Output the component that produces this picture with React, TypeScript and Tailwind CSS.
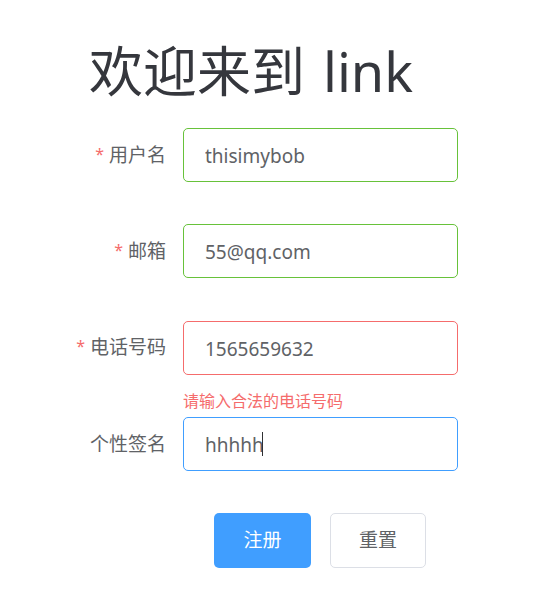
import React from 'react';

const FONT = '[font-family:"Noto_Sans","Noto_Sans_CJK_SC",sans-serif]';

type Field = {
  label: string;
  value: string;
  required: boolean;
  border: string;
  error?: string;
  caret?: boolean;
};

const fields: Field[] = [
  { label: '用户名', value: 'thisimybob', required: true, border: 'border-[#67c23a]' },
  { label: '邮箱', value: '55@qq.com', required: true, border: 'border-[#67c23a]' },
  {
    label: '电话号码',
    value: '1565659632',
    required: true,
    border: 'border-[#f56c6c]',
    error: '请输入合法的电话号码',
  },
  { label: '个性签名', value: 'hhhhh', required: false, border: 'border-[#409eff]', caret: true },
];

function App() {
  return (
    <div className={`min-h-screen bg-white ${FONT}`}>
      <h1 className="pl-[89px] pt-[44px] text-[54px] leading-[54px] font-normal text-[#35373d]">
        欢迎来到<span className="ml-[18px]">link</span>
      </h1>

      <form className="mt-[30px] flex flex-col gap-[42.3px]" onSubmit={(e) => e.preventDefault()}>
        {fields.map((f) => (
          <div key={f.label} className="flex items-center">
            <label className="w-[183px] pr-[17px] text-right text-[19px] text-[#606266]">
              {f.required && <span className="mr-[5px] align-[2px] text-[16px] text-[#f56c6c]">*</span>}
              {f.label}
            </label>
            <div className="relative">
              <input
                readOnly
                value={f.value}
                className={`h-[54px] w-[275px] rounded-[5px] border ${f.border} bg-white pl-[21px] pr-[20px] pt-[2px] text-[19px] text-[#606266] outline-none`}
              />
              {f.caret && (
                <span className="absolute left-[79px] top-[15px] h-[24px] w-px bg-[#303133]" />
              )}
              {f.error && (
                <div className="absolute left-0 top-[calc(100%+18px)] text-[16px] leading-[16px] text-[#f56c6c] whitespace-nowrap">
                  {f.error}
                </div>
              )}
            </div>
          </div>
        ))}

        <div className="flex gap-[19px] pl-[214px]">
          <button
            type="submit"
            className="h-[55px] w-[97px] rounded-[5px] bg-[#409eff] text-[19px] text-white"
          >
            注册
          </button>
          <button
            type="button"
            className="h-[55px] w-[96px] rounded-[5px] border border-[#dcdfe6] bg-white text-[19px] text-[#606266]"
          >
            重置
          </button>
        </div>
      </form>
    </div>
  );
}

export default App;
